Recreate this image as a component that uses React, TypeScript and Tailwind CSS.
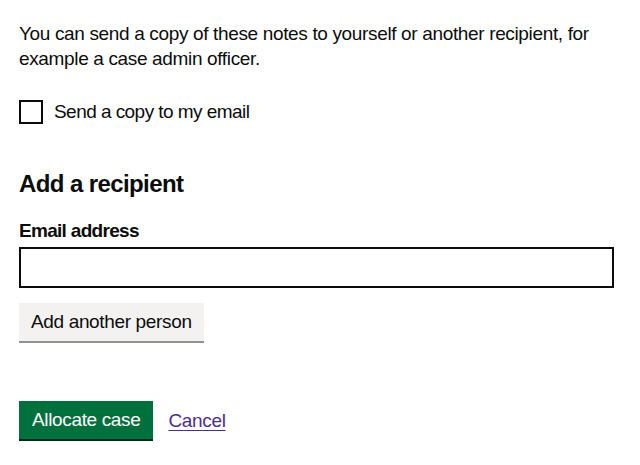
import React from 'react'

const font = { fontFamily: '"Liberation Sans", Arial, sans-serif' }

const App = () => {
  return (
    <div className="w-[640px] h-[465px] bg-white text-[#0b0c0c] px-[19px] pt-[21px] tracking-[-0.35px]" style={font}>
        <p className="text-[19px] leading-[25px] m-0 w-[600px]">
            You can send a copy of these notes to yourself or another recipient, for example a case admin officer.
        </p>

        <label className="flex items-center mt-[28px] h-[25px] cursor-pointer">
            <input type="checkbox" className="appearance-none w-[24px] h-[24px] border-2 border-[#0b0c0c] bg-white m-0 shrink-0" />
            <span className="text-[19px] leading-[25px] ml-[11px] tracking-[-0.55px]">Send a copy to my email</span>
        </label>

        <h2 className="text-[24px] leading-[30px] font-bold mt-[45px] tracking-[-0.6px]">Add a recipient</h2>

        <label htmlFor="email" className="block text-[19px] leading-[25px] font-bold mt-[19px] tracking-[-0.7px]">
            Email address
        </label>
        <input
            id="email"
            type="email"
            className="block mt-[4px] w-[595px] h-[41px] border-2 border-[#0b0c0c] bg-white px-[5px] text-[19px] outline-none"
        />

        <button className="block mt-[15px] bg-[#f3f2f1] text-[#0b0c0c] text-[19px] leading-[22px] px-[12px] pt-[8px] pb-[8px] shadow-[0_2px_0_#929191]">
            Add another person
        </button>

        <div className="flex items-center gap-[15px] mt-[60px]">
            <button className="bg-[#00703c] text-white text-[19px] leading-[22px] px-[13px] pt-[8px] pb-[8px] shadow-[0_2px_0_#002d18]">
                Allocate case
            </button>
            <a href="#" className="text-[19px] leading-[25px] text-[#4c2c92] underline underline-offset-[3px]">Cancel</a>
        </div>
    </div>
  )
}

export default App
